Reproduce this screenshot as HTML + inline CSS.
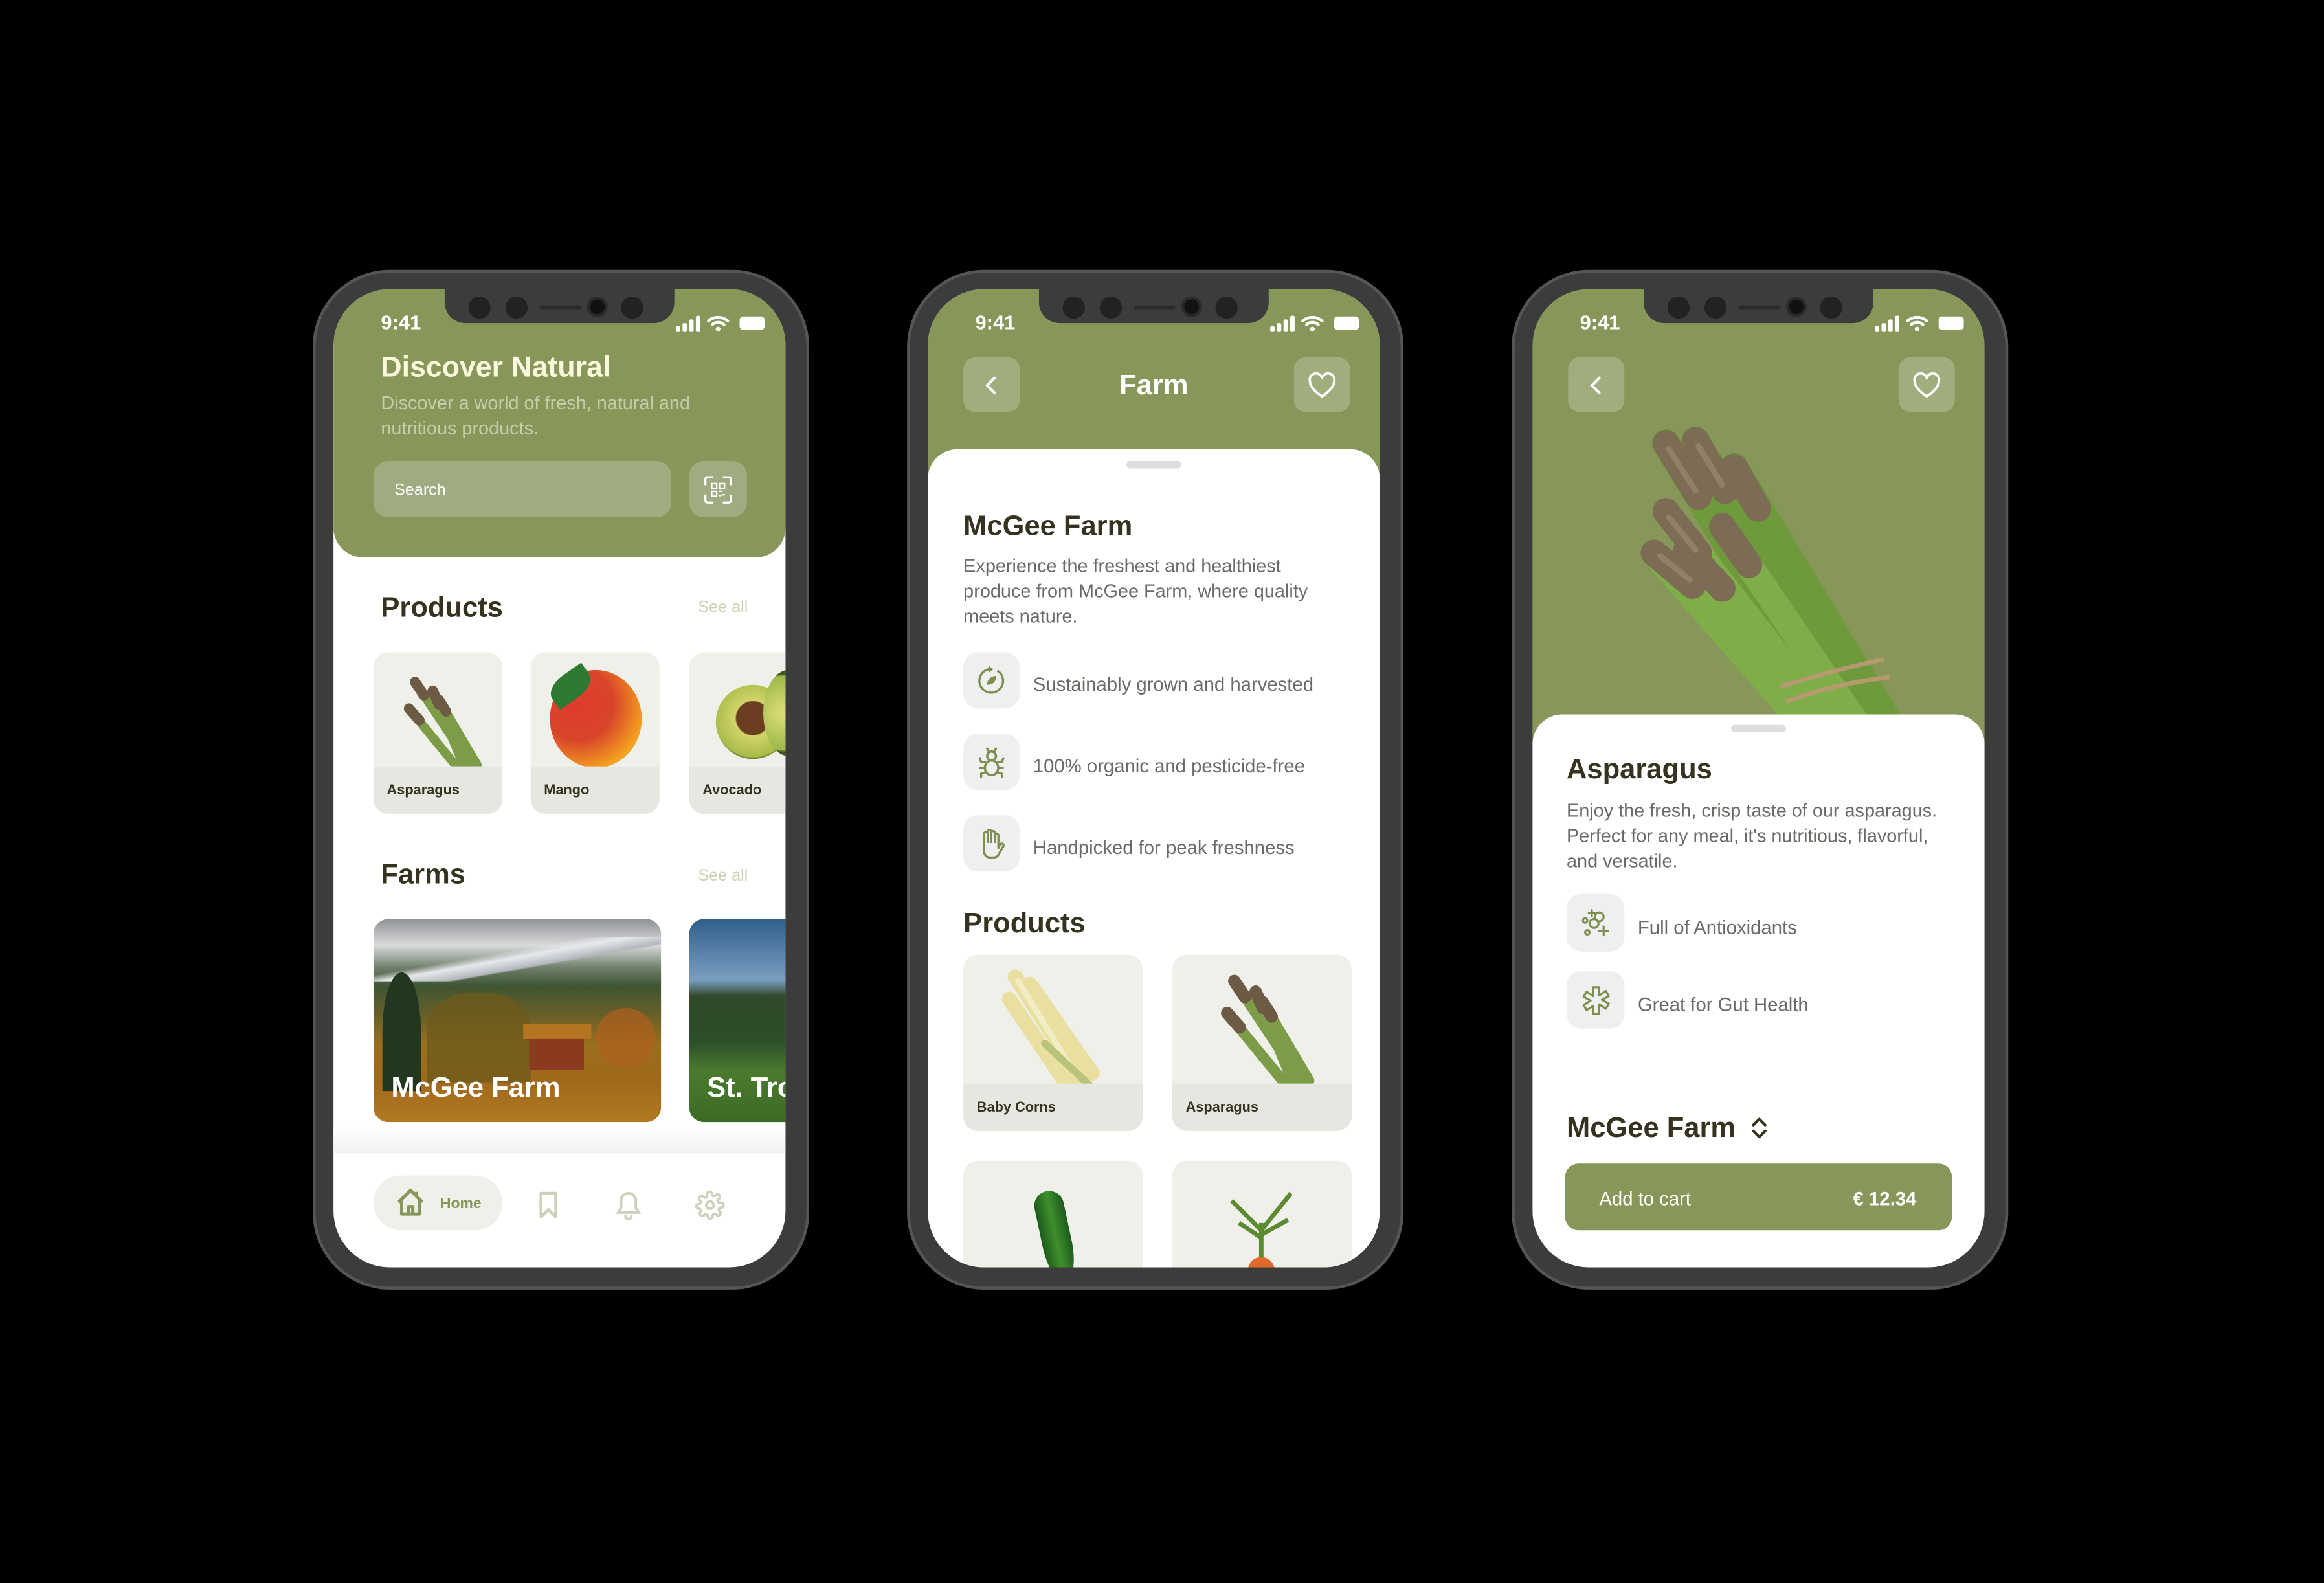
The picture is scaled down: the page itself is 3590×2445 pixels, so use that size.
<!DOCTYPE html>
<html><head><meta charset="utf-8">
<style>
*{margin:0;padding:0;box-sizing:border-box}
html,body{width:3590px;height:2445px;background:#000;overflow:hidden}
#s{position:absolute;left:0;top:0;width:1568px;height:1068px;transform:scale(2.2895);transform-origin:0 0;font-family:"Liberation Sans",sans-serif}
.ph{position:absolute;top:182px;width:335px;height:688px;border-radius:52px;background:#3c3c3c;box-shadow:inset 0 0 0 2px #555}
.sc{position:absolute;left:14px;top:13px;width:305px;height:660px;border-radius:38px;overflow:hidden;background:#fff}
.a{position:absolute}
.notch{position:absolute;left:75px;top:0;width:155px;height:23px;background:#3c3c3c;border-radius:0 0 14px 14px}
.dot{position:absolute;top:5px;width:15px;height:15px;border-radius:50%;background:#222}
.time{position:absolute;left:32px;top:15px;font-size:13.5px;font-weight:bold;color:#fff}
.h{color:#35321f;font-weight:bold;font-size:19px;margin-top:3px}
.see{color:#cdd1b2;font-size:11px;margin-top:1px}
.card{position:absolute;border-radius:10px;overflow:hidden;background:#f0f0eb}
.card .lb{position:absolute;left:0;right:0;bottom:0;background:#e7e7e1;font-size:9.5px;font-weight:bold;color:#35321f;padding-left:9px}
.ib{position:absolute;width:38px;height:38px;border-radius:10px;background:#efefef;display:flex;align-items:center;justify-content:center}
.ft{position:absolute;font-size:12.8px;color:#6a6a66;margin-top:2px}
.btn{position:absolute;width:38px;height:37px;border-radius:8px;background:rgba(255,255,255,.22);display:flex;align-items:center;justify-content:center}
.desc{position:absolute;font-size:12.6px;line-height:17px;color:#6a6a66;margin-top:1px}
</style></head><body><div id="s">

<!-- PHONE 1 -->
<div class="ph" style="left:211px">
<div class="sc">
 <div class="a" style="left:0;top:0;width:305px;height:181px;background:#879659;border-radius:0 0 20px 20px"></div>
 <div class="notch"><div class="dot" style="left:16px"></div><div class="dot" style="left:41px"></div><div class="a" style="left:64px;top:11px;width:28px;height:3px;border-radius:2px;background:#2a2a2a"></div><div class="dot" style="left:98px;width:10px;height:10px;top:7px;background:#111;box-shadow:0 0 0 2px #2a2a2a"></div><div class="dot" style="left:119px"></div></div>
 <div class="time">9:41</div>
 <svg class="a" style="left:231px;top:17px" width="62" height="12" viewBox="0 0 62 12"><g fill="#fff"><rect x="0" y="8" width="3" height="4" rx="1"/><rect x="4.5" y="6" width="3" height="6" rx="1"/><rect x="9" y="3.5" width="3" height="8.5" rx="1"/><rect x="13.5" y="1" width="3" height="11" rx="1"/></g><path d="M22 4.5a10 10 0 0 1 13 0M24.5 7a6 6 0 0 1 8 0" stroke="#fff" stroke-width="2" fill="none" stroke-linecap="round"/><circle cx="28.5" cy="10" r="1.6" fill="#fff"/><rect x="43" y="1.5" width="17" height="9" rx="2.5" fill="#fff"/></svg>
 <div class="a" style="left:32px;top:42px;font-size:19.5px;font-weight:bold;color:#fbf7dd">Discover Natural</div>
 <div class="a" style="left:32px;top:69px;font-size:12.6px;line-height:17px;color:#c6ccaa;width:240px">Discover a world of fresh, natural and nutritious products.</div>
 <div class="a" style="left:27px;top:116px;width:201px;height:38px;border-radius:10px;background:#a0ab80;color:#fff;font-size:11px;padding:14px 0 0 14px">Search</div>
 <div class="a" style="left:240px;top:116px;width:39px;height:38px;border-radius:10px;background:#a0ab80;display:flex;align-items:center;justify-content:center"><svg width="19" height="19" viewBox="0 0 20 20" fill="none" stroke="#fff" stroke-width="1.5" stroke-linecap="round"><path d="M1 6V2.5Q1 1 2.5 1H6M14 1h3.5Q19 1 19 2.5V6M19 14v3.5Q19 19 17.5 19H14M6 19H2.5Q1 19 1 17.5V14"/><rect x="5.5" y="5.5" width="3.5" height="3.5" stroke-width="1.1"/><rect x="11" y="5.5" width="3.5" height="3.5" stroke-width="1.1"/><rect x="5.5" y="11" width="3.5" height="3.5" stroke-width="1.1"/><path d="M11 11h1.5M13.5 13.5h1M11 14h1" stroke-width="1.1"/></svg></div>
 <div class="a h" style="left:32px;top:202px">Products</div>
 <div class="a see" style="left:246px;top:208px">See all</div>
 <div class="card" style="left:27px;top:245px;width:87px;height:109px">
  <svg class="a" style="left:14px;top:10px" width="60" height="67" viewBox="0 0 60 67"><g stroke-linecap="round"><path d="M52 67L14 10M47 67L26 16M42 67L10 28M56 66L30 22" stroke="#7d9c48" stroke-width="6"/><path d="M14 10l6 9M26 16l4 9M10 28l7 8M30 22l5 8" stroke="#6c5a45" stroke-width="7"/></g></svg>
  <div class="lb" style="height:32px;line-height:34px">Asparagus</div></div>
 <div class="card" style="left:133px;top:245px;width:87px;height:109px">
  <div class="a" style="left:13px;top:12px;width:62px;height:66px;border-radius:50%;background:radial-gradient(circle at 30% 35%,#e03a2e,#d8452a 40%,#f4a21f 75%,#f0c22a)"></div>
  <div class="a" style="left:12px;top:14px;width:30px;height:18px;border-radius:50% 0;background:#2e7a33;transform:rotate(-35deg)"></div>
  <div class="lb" style="height:32px;line-height:34px">Mango</div></div>
 <div class="card" style="left:240px;top:245px;width:87px;height:109px">
  <div class="a" style="left:18px;top:22px;width:50px;height:50px;border-radius:50%;background:radial-gradient(circle at 50% 45%,#6b3e22 0 30%,#d4d56a 32%,#a8bb48 70%,#3f5a1e 75%)"></div>
  <div class="a" style="left:50px;top:12px;width:34px;height:58px;border-radius:50%;background:radial-gradient(circle at 40% 50%,#dede7a,#9db84a 70%,#3a5419 74%)"></div>
  <div class="lb" style="height:32px;line-height:34px">Avocado</div></div>
 <div class="a h" style="left:32px;top:382px">Farms</div>
 <div class="a see" style="left:246px;top:389px">See all</div>
 <div class="a" style="left:27px;top:425px;width:194px;height:137px;border-radius:10px;overflow:hidden;background:linear-gradient(180deg,#8f9296 0%,#d9dadb 13%,#6f7f6a 24%,#3e5533 33%,#6a6028 48%,#9a6f1d 62%,#a0681b 80%,#b27a22 100%)">
  <div class="a" style="left:0;top:12px;width:194px;height:30px;background:linear-gradient(170deg,transparent 40%,#e6e8ec 48%,#b3b7bd 60%,transparent 62%)"></div>
  <div class="a" style="left:6px;top:36px;width:26px;height:80px;background:#23361f;border-radius:50% 50% 0 0"></div>
  <div class="a" style="left:36px;top:50px;width:70px;height:60px;background:#6e5a1c;border-radius:40% 40% 0 0;opacity:.8"></div>
  <div class="a" style="left:150px;top:60px;width:40px;height:40px;background:#b0601e;border-radius:50%;opacity:.7"></div>
  <div class="a" style="left:105px;top:77px;width:37px;height:25px;background:#8a3a1f"></div>
  <div class="a" style="left:101px;top:71px;width:46px;height:10px;background:#b57420"></div>
  <div class="a" style="left:12px;top:104px;font-size:19px;font-weight:900;color:#fff">McGee Farm</div></div>
 <div class="a" style="left:240px;top:425px;width:80px;height:137px;border-radius:10px;overflow:hidden;background:linear-gradient(180deg,#2f5f8a 0%,#7a9ec0 30%,#30492a 38%,#2c4e28 60%,#4b7a2e 75%,#3c6a26 100%)">
  <div class="a" style="left:12px;top:104px;font-size:19px;font-weight:900;color:#fff;white-space:nowrap">St. Troy</div></div>
 <div class="a" style="left:0;top:565px;width:305px;height:18px;background:linear-gradient(#fff,#f1f1f1)"></div>
 <div class="a" style="left:27px;top:598px;width:87px;height:37px;border-radius:19px;background:#f0f0ea"></div>
 <svg class="a" style="left:42px;top:606px" width="20" height="20" viewBox="0 0 20 20" fill="none" stroke="#879659" stroke-width="2.2" stroke-linejoin="round"><path d="M2 10L10 2l8 8M4 8.5V18h12V8.5M8.5 18v-5h3v5M14 3v3"/></svg>
 <div class="a" style="left:72px;top:612px;font-size:10px;font-weight:bold;color:#879659">Home</div>
 <svg class="a" style="left:138px;top:608px" width="14" height="20" viewBox="0 0 14 20" fill="none" stroke="#cdd1bb" stroke-width="2" stroke-linejoin="round"><path d="M2 2h10v16l-5-5-5 5z"/></svg>
 <svg class="a" style="left:190px;top:608px" width="18" height="20" viewBox="0 0 18 20" fill="none" stroke="#cdd1bb" stroke-width="1.8" stroke-linecap="round"><path d="M9 2a5 5 0 0 1 5 5v5l2 3H2l2-3V7a5 5 0 0 1 5-5zM7 17.5a2 2 0 0 0 4 0"/></svg>
 <svg class="a" style="left:244px;top:608px" width="20" height="20" viewBox="0 0 24 24" fill="none" stroke="#cdd1bb" stroke-width="2"><circle cx="12" cy="12" r="3"/><path d="M19.4 15a1.6 1.6 0 0 0 .3 1.8l.1.1a2 2 0 1 1-2.8 2.8l-.1-.1a1.6 1.6 0 0 0-2.7 1.1V21a2 2 0 1 1-4 0v-.1a1.6 1.6 0 0 0-2.7-1.1l-.1.1a2 2 0 1 1-2.8-2.8l.1-.1A1.6 1.6 0 0 0 3.6 15H3a2 2 0 1 1 0-4h.1a1.6 1.6 0 0 0 1.1-2.7l-.1-.1a2 2 0 1 1 2.8-2.8l.1.1A1.6 1.6 0 0 0 9.7 4.6V3a2 2 0 1 1 4 0v.1a1.6 1.6 0 0 0 2.7 1.1l.1-.1a2 2 0 1 1 2.8 2.8l-.1.1A1.6 1.6 0 0 0 20.4 10H21a2 2 0 1 1 0 4h-.1a1.6 1.6 0 0 0-1.5 1z"/></svg>
</div></div>

<!-- PHONE 2 -->
<div class="ph" style="left:612px">
<div class="sc">
 <div class="a" style="left:0;top:0;width:305px;height:140px;background:#879659"></div>
 <div class="notch"><div class="dot" style="left:16px"></div><div class="dot" style="left:41px"></div><div class="a" style="left:64px;top:11px;width:28px;height:3px;border-radius:2px;background:#2a2a2a"></div><div class="dot" style="left:98px;width:10px;height:10px;top:7px;background:#111;box-shadow:0 0 0 2px #2a2a2a"></div><div class="dot" style="left:119px"></div></div>
 <div class="time">9:41</div>
 <svg class="a" style="left:231px;top:17px" width="62" height="12" viewBox="0 0 62 12"><g fill="#fff"><rect x="0" y="8" width="3" height="4" rx="1"/><rect x="4.5" y="6" width="3" height="6" rx="1"/><rect x="9" y="3.5" width="3" height="8.5" rx="1"/><rect x="13.5" y="1" width="3" height="11" rx="1"/></g><path d="M22 4.5a10 10 0 0 1 13 0M24.5 7a6 6 0 0 1 8 0" stroke="#fff" stroke-width="2" fill="none" stroke-linecap="round"/><circle cx="28.5" cy="10" r="1.6" fill="#fff"/><rect x="43" y="1.5" width="17" height="9" rx="2.5" fill="#fff"/></svg>
 <div class="btn" style="left:24px;top:46px"><svg width="14" height="14" viewBox="0 0 14 14" fill="none" stroke="#fff" stroke-width="1.8" stroke-linecap="round" stroke-linejoin="round"><path d="M9 2L4 7l5 5"/></svg></div>
 <div class="a" style="left:0;width:305px;text-align:center;top:55px;font-size:19px;font-weight:bold;color:#fff">Farm</div>
 <div class="btn" style="left:247px;top:46px"><svg width="20" height="18" viewBox="0 0 24 22" fill="none" stroke="#fff" stroke-width="2" stroke-linejoin="round"><path d="M12 20S2 14 2 7.5A5 5 0 0 1 12 5a5 5 0 0 1 10 2.5C22 14 12 20 12 20z"/></svg></div>
 <div class="a" style="left:0;top:108px;width:305px;height:560px;background:#fff;border-radius:20px 20px 0 0"></div>
 <div class="a" style="left:134px;top:116px;width:37px;height:5px;border-radius:3px;background:#dedede"></div>
 <div class="a h" style="left:24px;top:147px">McGee Farm</div>
 <div class="desc" style="left:24px;top:178px;width:260px">Experience the freshest and healthiest produce from McGee Farm, where quality meets nature.</div>
 <div class="ib" style="left:24px;top:245px"><svg width="20" height="20" viewBox="0 0 20 20" fill="none" stroke="#7d8f4e" stroke-width="1.5"><path d="M8 2.5A8 8 0 1 0 14 3.5"/><path d="M8 1l2 1.5L8 4" fill="#7d8f4e"/><path d="M7 13c0-4 3-6 6-6 0 4-2 6-6 6z" fill="#7d8f4e" stroke="none"/></svg></div>
 <div class="ft" style="left:71px;top:257px">Sustainably grown and harvested</div>
 <div class="ib" style="left:24px;top:300px"><svg width="18" height="22" viewBox="0 0 18 22" fill="none" stroke="#7d8f4e" stroke-width="1.5" stroke-linecap="round"><path d="M6 2l1.5 2.5M12 2l-1.5 2.5"/><circle cx="9" cy="7" r="3"/><ellipse cx="9" cy="15" rx="4.5" ry="5"/><path d="M4.5 11H2L1 8.5M13.5 11H16l1-2.5M4.5 15H1.5M13.5 15h3M5 18l-3 1v2M13 18l3 1v2"/></svg></div>
 <div class="ft" style="left:71px;top:312px">100% organic and pesticide-free</div>
 <div class="ib" style="left:24px;top:355px"><svg width="18" height="22" viewBox="0 0 18 22" fill="none" stroke="#7d8f4e" stroke-width="1.5" stroke-linejoin="round"><path d="M4 11V4.5a1.2 1.2 0 0 1 2.4 0V10V3a1.2 1.2 0 0 1 2.4 0v7V3.8a1.2 1.2 0 0 1 2.4 0V10V5.5a1.2 1.2 0 0 1 2.4 0V14l1.2-2.5a1.3 1.3 0 0 1 2.2 1.3L14 18a4 4 0 0 1-3.6 2.5H8A4 4 0 0 1 4 16.5z"/></svg></div>
 <div class="ft" style="left:71px;top:367px">Handpicked for peak freshness</div>
 <div class="a h" style="left:24px;top:415px">Products</div>
 <div class="card" style="left:24px;top:449px;width:121px;height:119px">
  <svg class="a" style="left:25px;top:10px" width="75" height="80" viewBox="0 0 75 80"><g stroke-linecap="round"><path d="M10 5L55 75M20 10L62 70M6 20L45 78" stroke="#e8dfa0" stroke-width="10"/><path d="M12 8L50 70" stroke="#f3edc4" stroke-width="4"/><path d="M30 50L60 78" stroke="#b9c47a" stroke-width="5"/></g></svg>
  <div class="lb" style="height:32px;line-height:34px">Baby Corns</div></div>
 <div class="card" style="left:165px;top:449px;width:121px;height:119px">
  <svg class="a" style="left:25px;top:4px" width="72" height="84" viewBox="0 0 60 67"><g stroke-linecap="round"><path d="M52 67L14 10M47 67L26 16M42 67L10 28M56 66L30 22" stroke="#7d9c48" stroke-width="6"/><path d="M14 10l6 9M26 16l4 9M10 28l7 8M30 22l5 8" stroke="#6c5a45" stroke-width="7"/></g></svg>
  <div class="lb" style="height:32px;line-height:34px">Asparagus</div></div>
 <div class="card" style="left:24px;top:588px;width:121px;height:119px">
  <div class="a" style="left:52px;top:20px;width:20px;height:60px;border-radius:10px 10px 40% 40%;background:linear-gradient(90deg,#1d5a1c,#3f8f2c,#1e5a1d);transform:rotate(-12deg)"></div></div>
 <div class="card" style="left:165px;top:588px;width:121px;height:119px">
  <svg class="a" style="left:30px;top:12px" width="60" height="60" viewBox="0 0 60 60" stroke="#5c8a30" stroke-width="3" fill="none"><path d="M30 60V30M30 35L10 15M30 35L50 10M30 40L15 30M30 38L48 28"/><circle cx="30" cy="62" r="9" fill="#e06a2a" stroke="none"/></svg></div>
</div></div>

<!-- PHONE 3 -->
<div class="ph" style="left:1020px">
<div class="sc" style="background:#879659">
 <div class="notch"><div class="dot" style="left:16px"></div><div class="dot" style="left:41px"></div><div class="a" style="left:64px;top:11px;width:28px;height:3px;border-radius:2px;background:#2a2a2a"></div><div class="dot" style="left:98px;width:10px;height:10px;top:7px;background:#111;box-shadow:0 0 0 2px #2a2a2a"></div><div class="dot" style="left:119px"></div></div>
 <div class="time">9:41</div>
 <svg class="a" style="left:231px;top:17px" width="62" height="12" viewBox="0 0 62 12"><g fill="#fff"><rect x="0" y="8" width="3" height="4" rx="1"/><rect x="4.5" y="6" width="3" height="6" rx="1"/><rect x="9" y="3.5" width="3" height="8.5" rx="1"/><rect x="13.5" y="1" width="3" height="11" rx="1"/></g><path d="M22 4.5a10 10 0 0 1 13 0M24.5 7a6 6 0 0 1 8 0" stroke="#fff" stroke-width="2" fill="none" stroke-linecap="round"/><circle cx="28.5" cy="10" r="1.6" fill="#fff"/><rect x="43" y="1.5" width="17" height="9" rx="2.5" fill="#fff"/></svg>
 <div class="btn" style="left:24px;top:46px"><svg width="14" height="14" viewBox="0 0 14 14" fill="none" stroke="#fff" stroke-width="1.8" stroke-linecap="round" stroke-linejoin="round"><path d="M9 2L4 7l5 5"/></svg></div>
 <div class="btn" style="left:247px;top:46px"><svg width="20" height="18" viewBox="0 0 24 22" fill="none" stroke="#fff" stroke-width="2" stroke-linejoin="round"><path d="M12 20S2 14 2 7.5A5 5 0 0 1 12 5a5 5 0 0 1 10 2.5C22 14 12 20 12 20z"/></svg></div>
 <svg class="a" style="left:0;top:0" width="305" height="290" viewBox="0 0 305 290">
  <g stroke-linecap="round">
   <g stroke="#6f9a3c" stroke-width="19">
    <path d="M110 102L222 292"/><path d="M136 120L240 292"/><path d="M90 104L205 292"/>
   </g>
   <g stroke="#7fae48" stroke-width="18">
    <path d="M90 150L200 292"/><path d="M128 160L218 292"/><path d="M82 178L182 292"/><path d="M104 176L198 292"/>
   </g>
   <g stroke="#7c6b55" stroke-width="18">
    <path d="M90 104L112 140"/><path d="M110 102L130 136"/><path d="M136 120L152 148"/>
    <path d="M90 150L112 178"/><path d="M128 160L146 186"/><path d="M82 178L108 200"/><path d="M104 176L128 202"/>
   </g>
   <g stroke="#9a8a6e" stroke-width="4" opacity=".7">
    <path d="M92 108L110 136"/><path d="M112 106L128 132"/><path d="M92 154L110 176"/><path d="M86 180L106 196"/>
   </g>
   <path d="M168 268Q200 258 236 250M172 278Q205 266 240 262" stroke="#b59a70" stroke-width="3" fill="none"/>
  </g>
 </svg>
 <div class="a" style="left:0;top:287px;width:305px;height:380px;background:#fff;border-radius:20px 20px 0 0"></div>
 <div class="a" style="left:134px;top:294px;width:37px;height:5px;border-radius:3px;background:#dedede"></div>
 <div class="a h" style="left:23px;top:311px">Asparagus</div>
 <div class="desc" style="left:23px;top:343px;width:262px">Enjoy the fresh, crisp taste of our asparagus. Perfect for any meal, it's nutritious, flavorful, and versatile.</div>
 <div class="ib" style="left:23px;top:408px;width:39px;height:39px"><svg width="22" height="22" viewBox="0 0 22 22" fill="none" stroke="#7d8f4e" stroke-width="1.4" stroke-linecap="round"><circle cx="3.5" cy="9" r="1.5"/><circle cx="9.5" cy="11" r="3"/><circle cx="13" cy="6.5" r="3"/><circle cx="5" cy="17" r="1.5"/><path d="M8 2v4M6 4h4M16 13v6M13 16h6"/></svg></div>
 <div class="ft" style="left:71px;top:421px">Full of Antioxidants</div>
 <div class="ib" style="left:23px;top:460px;width:39px;height:39px"><svg width="22" height="22" viewBox="0 0 22 22" fill="none" stroke="#7d8f4e" stroke-width="1.4" stroke-linejoin="round"><path d="M9 2h4v5.5l4.5-3 2 3.5-4.7 2.5 4.7 2.5-2 3.5-4.5-3V20H9v-5.5l-4.5 3-2-3.5L7.2 11 2.5 8.5l2-3.5L9 8z"/></svg></div>
 <div class="ft" style="left:71px;top:473px">Great for Gut Health</div>
 <div class="a h" style="left:23px;top:553px">McGee Farm</div>
 <svg class="a" style="left:147px;top:558px" width="12" height="16" viewBox="0 0 12 16" fill="none" stroke="#35321f" stroke-width="1.8" stroke-linecap="round" stroke-linejoin="round"><path d="M2 6l4-4 4 4M2 10l4 4 4-4"/></svg>
 <div class="a" style="left:22px;top:590px;width:261px;height:45px;border-radius:9px;background:#879659"></div>
 <div class="a" style="left:45px;top:606px;font-size:12.8px;color:#fff">Add to cart</div>
 <div class="a" style="left:195px;width:64px;text-align:right;top:606px;font-size:12.8px;font-weight:bold;color:#fff">€ 12.34</div>
</div></div>

</div></body></html>
